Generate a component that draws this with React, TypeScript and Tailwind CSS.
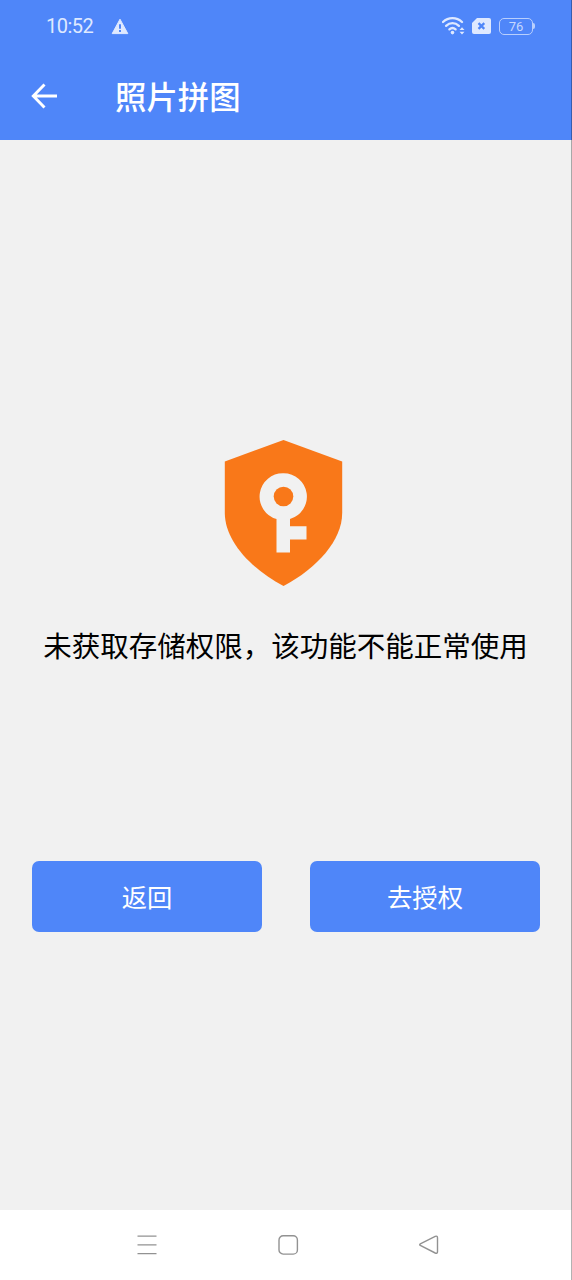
import React from 'react';

const StatusBar: React.FC = () => (
  <div className="flex h-[52px] items-center justify-between pl-[46px] pr-9 text-[#dfe9ff]">
    <div className="flex items-center gap-[18px]">
      <span className="w-[47px] font-['Roboto','Liberation_Sans',sans-serif] text-[20px] leading-[52px] tracking-[-0.5px]">10:52</span>
      <svg className="h-[17px] w-[18px]" viewBox="0 0 18 17">
        <path d="M9 1.2 16.8 15.6H1.2Z" fill="currentColor" stroke="currentColor" strokeWidth="1" strokeLinejoin="round" />
        <path d="M9 6.2v4.6M9 12v1.9" stroke="#4f86f9" strokeWidth="2" />
      </svg>
    </div>

    <div className="flex items-center">
      <svg className="h-5 w-6" viewBox="0 0 24 20" fill="none">
        <g stroke="currentColor" strokeWidth="2.3" strokeLinecap="round">
          <path d="M1 6C6.4.8 14.6.8 20 6" />
          <path d="M4.1 9.9c3.8-3.7 9-3.7 12.8 0" />
          <path d="M7.4 13.4c2-1.8 4.2-1.8 6.2 0" />
        </g>
        <circle cx="10.5" cy="16.6" r="1.8" fill="currentColor" />
        <path d="M20 11.2 22.5 14h-5ZM20 18.6 17.5 15.8h5Z" fill="currentColor" />
      </svg>
      <svg className="ml-[6px] h-4 w-[19px]" viewBox="0 0 19 16">
        <path d="M5 0h12a2 2 0 0 1 2 2v12a2 2 0 0 1-2 2H2a2 2 0 0 1-2-2V5Z" fill="currentColor" />
        <path d="m6.5 5.1 5.8 5.8m0-5.8-5.8 5.8" stroke="#4f86f9" strokeWidth="2.2" />
      </svg>
      <div className="ml-2 flex h-[17px] w-[34px] items-center justify-center rounded-[5px] border-[1.5px] border-[#b9cffd] font-['Roboto','Liberation_Sans',sans-serif] text-[13px] leading-none text-[#c6d8fd]">
        76
      </div>
      <div className="h-[6px] w-[2px] rounded-r-sm bg-[#b9cffd]" />
    </div>
  </div>
);

const ShieldKey: React.FC = () => (
  <svg className="mr-[4px] h-[146px] w-[119px]" viewBox="-0.5 0 119 146">
    <path
      d="M59 0 117.7 21.5V73C117.7 100 93 128 59 146 25 128 .3 100 .3 73V21.5Z"
      fill="#f97819"
    />
    <path
      d="M59 33.3a23.3 23.3 0 0 1 6.5 45.7v7.2H82v13.2H65.5v13.2H52V79A23.3 23.3 0 0 1 59 33.3Z"
      fill="#f1f1f1"
    />
    <circle cx="59" cy="56.5" r="9.8" fill="#f97819" />
  </svg>
);

const App: React.FC = () => {
  return (
    <div className="flex h-[1280px] w-[572px] flex-col overflow-hidden font-['Noto_Sans_CJK_SC',sans-serif] select-none">
      {/* Header */}
      <header className="h-[140px] shrink-0 border-r border-black/30 bg-[#4f86f9]">
        <StatusBar />
        <div className="flex h-[88px] items-center text-white">
          <button className="mb-px ml-[31px]">
            <svg className="h-[26px] w-[26px]" viewBox="0 0 26 26" fill="none" stroke="currentColor" strokeWidth="2.9">
              <path d="M26 13H2.7M13.5 1.6 2.3 13 13.5 24.4" />
            </svg>
          </button>
          <h1 className="ml-[58px] text-[31.4px] leading-[44px] font-medium">照片拼图</h1>
        </div>
      </header>

      {/* Permission notice */}
      <main className="flex flex-1 flex-col items-center border-r border-black/30 bg-[#f1f1f1] pt-[300px]">
        <ShieldKey />
        <p className="mt-[38px] text-[28.5px] leading-[42px] whitespace-nowrap text-black">
          未获取存储权限，该功能不能正常使用
        </p>
        <div className="mt-[195px] flex w-full gap-12 pr-[31px] pl-8 text-[25.3px] text-white">
          <button className="h-[71px] flex-1 rounded-[7px] bg-[#4f86f9]">返回</button>
          <button className="h-[71px] flex-1 rounded-[7px] bg-[#4f86f9]">去授权</button>
        </div>
      </main>

      {/* System navigation */}
      <nav className="flex h-[70px] shrink-0 items-center border-r border-black/30 bg-white pl-[136px] text-[#929292]">
        <svg className="h-[22px] w-[22px]" viewBox="0 0 22 22" stroke="currentColor" strokeWidth="1.4">
          <path d="M1.5 2.1h19M1.5 10.9h19M1.5 19.6h19" />
        </svg>
        <svg className="ml-[119px] h-[22px] w-[22px]" viewBox="0 0 22 22" fill="none" stroke="currentColor" strokeWidth="1.4">
          <rect x="2" y="1.7" width="18.4" height="18.4" rx="4.2" />
        </svg>
        <svg className="ml-[119px] h-[22px] w-[22px]" viewBox="0 0 22 22" fill="none" stroke="currentColor" strokeWidth="1.4">
          <path d="M2.3 9.9 17.2 2.4Q19.5 1.5 19.5 3.7V17.7Q19.5 19.9 17.2 19L2.3 11.5Q1.1 10.7 2.3 9.9Z" />
        </svg>
      </nav>
    </div>
  );
};

export default App;
